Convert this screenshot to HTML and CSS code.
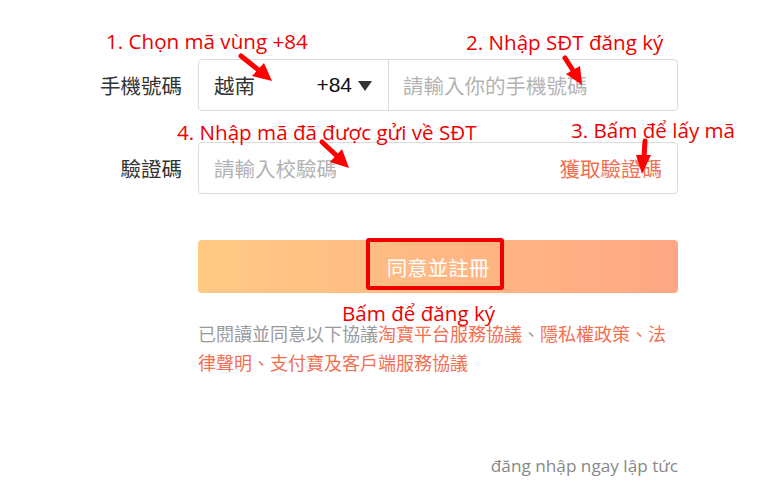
FILE: index.html
```html
<!DOCTYPE html>
<html>
<head>
<meta charset="utf-8">
<link rel="stylesheet" href="styles.css">
</head>
<body>
<div class="page">
  <div class="form">
    <div class="row">
      <div class="label">手機號碼</div>
      <div class="field">
        <div class="region">
          <span class="country">越南</span>
          <span class="code">+84</span>
          <span class="caret"></span>
        </div>
        <div class="input ph">請輸入你的手機號碼</div>
      </div>
    </div>
    <div class="row row2">
      <div class="label">驗證碼</div>
      <div class="field">
        <div class="input ph first">請輸入校驗碼</div>
        <div class="getcode">獲取驗證碼</div>
      </div>
    </div>
    <div class="row row3">
      <div class="label"></div>
      <div class="btn">同意並註冊</div>
    </div>
    <div class="row row4">
      <div class="label"></div>
      <div class="agree"><span class="gray">已閱讀並同意以下協議</span><span class="link">淘寶平台服務協議</span><span class="gray">、</span><span class="link">隱私權政策、法律聲明、支付寶及客戶端服務協議</span></div>
    </div>
    <div class="login">đăng nhập ngay lập tức</div>
  </div>

  <div class="note n1">1. Chọn mã vùng +84</div>
  <div class="note n2">2. Nhập SĐT đăng ký</div>
  <div class="note n4">4. Nhập mã đã được gửi về SĐT</div>
  <div class="note n3">3. Bấm để lấy mã</div>
  <div class="note n5">Bấm để đăng ký</div>
  <div class="hl"></div>

  <svg class="arrows" width="784" height="498" viewBox="0 0 784 498">
    <g fill="#f00" stroke="#f00">
      <line x1="241" y1="56" x2="261" y2="72" stroke-width="5" stroke-linecap="round"/>
      <polygon points="272,81 252,76 264,63" stroke="none"/>
      <line x1="565" y1="58" x2="574" y2="72" stroke-width="5" stroke-linecap="round"/>
      <polygon points="582,85 566,74 580,66" stroke="none"/>
      <line x1="322" y1="142" x2="338" y2="157" stroke-width="5" stroke-linecap="round"/>
      <polygon points="349,168 330,162 342,149" stroke="none"/>
      <line x1="645" y1="141" x2="644" y2="157" stroke-width="5" stroke-linecap="round"/>
      <polygon points="642,174 636,155 651,155" stroke="none"/>
    </g>
  </svg>
</div>
</body>
</html>
```
FILE: styles.css
```css
html, body {
  margin: 0;
  padding: 0;
  background: #fff;
}
.page {
  position: relative;
  width: 784px;
  height: 498px;
  overflow: hidden;
  font-family: "Noto Sans CJK TC", "Noto Sans", sans-serif;
}
.form {
  padding-top: 59px;
  padding-left: 92px;
  width: 586px;
}
.row {
  display: flex;
  align-items: center;
}
.row2 { margin-top: 31px; }
.row3 { margin-top: 46px; }
.row4 { margin-top: 26px; align-items: flex-start; }
.label {
  width: 90px;
  flex: none;
  text-align: right;
  padding-right: 16px;
  font-size: 20.5px;
  color: #333;
  white-space: nowrap;
}
.field {
  flex: 1;
  height: 50px;
  border: 1px solid #dcdcdc;
  border-radius: 4px;
  display: flex;
  align-items: center;
}
.region {
  width: 190px;
  height: 100%;
  box-sizing: border-box;
  border-right: 1px solid #dcdcdc;
  display: flex;
  align-items: center;
  padding-left: 15px;
}
.country {
  font-size: 20.5px;
  color: #333;
  flex: 1;
}
.code {
  font-family: "Liberation Sans", Arial, sans-serif;
  font-size: 21px;
  color: #111;
}
.caret {
  width: 0;
  height: 0;
  border-left: 7px solid transparent;
  border-right: 7px solid transparent;
  border-top: 10px solid #333;
  margin: 2px 16px 0 6px;
}
.input {
  flex: 1;
  font-size: 20.5px;
  padding-left: 14px;
}
.input.first { padding-left: 15px; }
.ph { color: #b3b3b3; }
.getcode {
  font-size: 20.5px;
  color: #f07050;
  padding-right: 15px;
}
.btn {
  flex: 1;
  height: 53px;
  border-radius: 4px;
  background: linear-gradient(to right, #ffc984, #ffa784);
  color: #fff;
  font-size: 20.5px;
  display: flex;
  align-items: center;
  justify-content: center;
}
.agree {
  flex: 1;
  font-size: 18px;
  line-height: 29px;
}
.gray { color: #9a9a9a; }
.link { color: #f36f50; }
.login {
  margin-top: 77px;
  text-align: right;
  font-family: "Open Sans", sans-serif;
  font-size: 17.2px;
  color: #888;
}
.note {
  position: absolute;
  color: #ee0000;
  font-family: "Open Sans", sans-serif;
  font-size: 20.6px;
  line-height: 24px;
  white-space: nowrap;
}
.n1 { left: 106px; top: 29px; }
.n2 { left: 466px; top: 30px; }
.n4 { left: 177px; top: 120px; }
.n3 { left: 571px; top: 118px; }
.n5 { left: 342px; top: 301px; }
.hl {
  position: absolute;
  left: 366px;
  top: 238px;
  width: 130px;
  height: 44px;
  border: 4px solid #ee0000;
  border-radius: 3px;
}
.arrows {
  position: absolute;
  left: 0;
  top: 0;
}
```
